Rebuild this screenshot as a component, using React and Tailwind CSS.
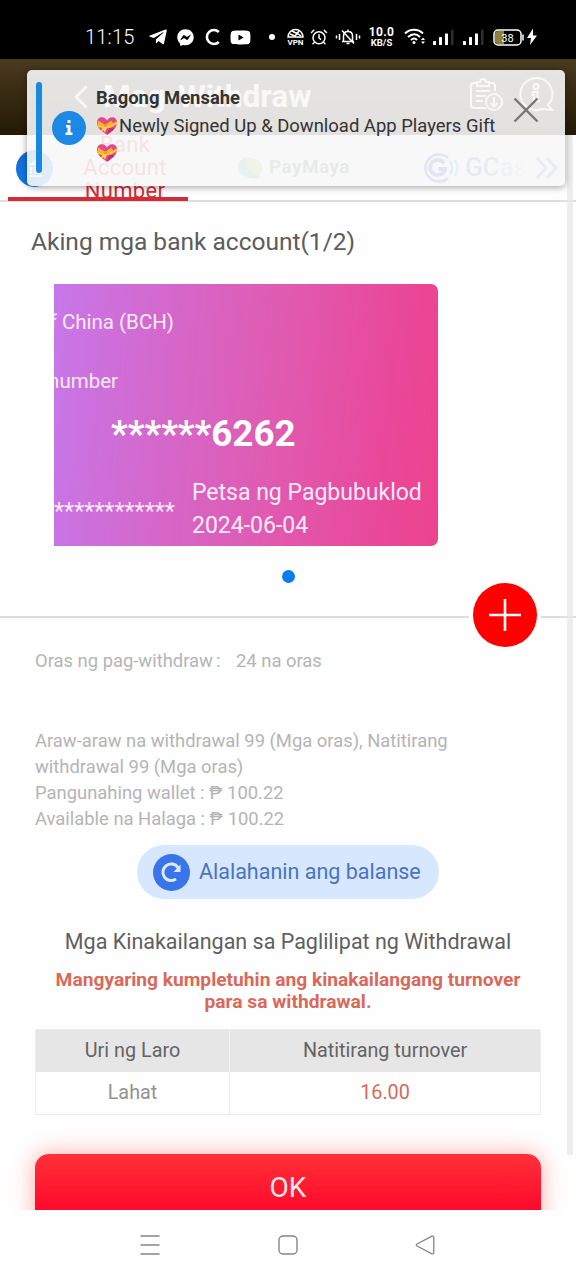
import { useState } from "react";
import { FaTelegramPlane, FaFacebookMessenger, FaYoutube } from "react-icons/fa";
import { AlarmClock } from "lucide-react";

// Emoji de regalo con corazón
const HeartGift = ({ className }) => (
  <svg viewBox="0 0 24 22" className={className} role="img" aria-label="heart with ribbon">
    <path d="M12 20.5C5 16.5 1 12.5 1 7.500C1 3.500 3.500 1.500 6.300 1.500C9 1.500 11 3 12 5C13 3 15 1.500 17.700 1.500C20.500 1.500 23 3.500 23 7.500C23 12.500 19 16.500 12 20.500Z" fill="#e5478c" />
    <path d="M14.500 12.500L20 13.500C18 16.500 15.500 18.700 12 20.500Z" fill="#c92f74" />
    <path d="M1.500 8L9 11L15 10L22.900 6L23 9L16 13L8 13.800L2.300 12Z" fill="#fcc63d" />
    <path d="M2 5L10 9.500L8.500 12L2 10ZM11 9L17 5L19 9L12 11.500Z" fill="#f9b52a" />
    <path d="M9 10.500L5 16.500L8.500 16L9.500 18.500L12.500 12Z" fill="#ffd259" />
    <circle cx="10.500" cy="10.500" r="2" fill="#ef9d22" />
  </svg>
);

const Signal = ({ className }) => (
  <svg viewBox="0 0 21 17" className={className}>
    <rect x="0" y="12" width="3" height="4" rx="0.5" fill="#fff" />
    <rect x="6" y="8" width="3" height="8" rx="0.5" fill="#fff" />
    <rect x="12" y="4.500" width="3" height="11.500" rx="0.5" fill="#fff" />
    <rect x="18" y="0.500" width="2.500" height="15.500" rx="0.5" fill="#2e2e2e" />
  </svg>
);

const StatusBar = () => (
  <div className="flex h-[59px] shrink-0 items-center bg-black pt-[15px] pl-[85px] text-white">
    <span className="w-[50px] text-[20px] leading-none font-light tracking-[0.2px]">11:15</span>
    <FaTelegramPlane className="ml-[13px] size-[20px]" />
    <FaFacebookMessenger className="ml-[9px] size-[17px]" />
    <svg viewBox="0 0 17 18" className="ml-[10px] h-[18px] w-[17px]">
      <path d="M14.800 4A7 7 0 1 0 14.800 14" fill="none" stroke="#fff" strokeWidth="2.600" />
    </svg>
    <FaYoutube className="ml-[9px] size-[21px]" />
    <span className="ml-[18px] size-[6px] rounded-full bg-white" />
    <svg viewBox="0 0 17 18" className="ml-[12px] h-[18px] w-[17px]">
      <path d="M1 9A7.500 7.500 0 0 1 16 9Z" fill="none" stroke="#fff" strokeWidth="1.500" />
      <path d="M3 6L8 8L12 3M5 3L11 6L14 8" fill="none" stroke="#fff" strokeWidth="1.500" />
      <text x="8.500" y="17" fill="#fff" fontSize="8" fontWeight="700" textAnchor="middle">VPN</text>
    </svg>
    <AlarmClock className="ml-[6px] size-[18px]" strokeWidth={2} />
    <svg viewBox="0 0 26 18" className="ml-[7px] h-[18px] w-[26px]" fill="none" stroke="#fff" strokeWidth="1.500">
      <path d="M7 13.500H19M8.500 13V8C8.500 5 10 3.500 13 3.500C16 3.500 17.500 5 17.500 8V13M11.500 15.500H14.500M13 1.500V3.500M7 2.500L19 15.500" />
      <path d="M4.500 6V12M1.500 7.500V10.500M21.500 6V12M24.500 7.500V10.500" />
    </svg>
    <div className="ml-[7px] w-[27px] text-center font-bold">
      <div className="text-[12px] leading-[11px] tracking-[0.3px]">10.0</div>
      <div className="text-[9.500px] leading-[9px]">KB/S</div>
    </div>
    <svg viewBox="0 0 22 18" className="ml-[9px] h-[18px] w-[22px]" fill="none" stroke="#fff" strokeWidth="2">
      <path d="M1 5.500C6 0.500 14 0.500 19 5.500M4 9C8 5.500 12.500 5.500 16 9M7 12C9 10.300 11.500 10.300 13 12" />
      <circle cx="10" cy="14.500" r="1.500" fill="#fff" stroke="none" />
      <path d="M17 12L19 9.500L21 12ZM17 13.500L19 16L21 13.500Z" fill="#fff" stroke="none" />
    </svg>
    <Signal className="ml-[7px] h-[17px] w-[21px]" />
    <Signal className="ml-[9px] h-[17px] w-[21px]" />
    <svg viewBox="0 0 32 17" className="ml-[9px] h-[17px] w-[32px]">
      <rect x="1" y="1" width="27" height="15" rx="4" fill="none" stroke="#fff" strokeWidth="1.500" />
      <path d="M2 5Q2 2 5 2H11V15H5Q2 15 2 12Z" fill="#8b8040" />
      <path d="M30 5.500V11.500" stroke="#fff" strokeWidth="1.500" />
      <text x="14.500" y="12.500" fill="#fff" fontSize="11" textAnchor="middle">38</text>
    </svg>
    <svg viewBox="0 0 12 18" className="ml-[1px] h-[18px] w-[12px]">
      <path d="M7 0.500L1 10H5L4 17L11 7.500H7Z" fill="#fff" />
    </svg>
  </div>
);

const Header = () => (
  <div className="flex h-[76px] shrink-0 items-center bg-linear-to-b from-[#4a3a20] to-[#241a04] pl-[74px] text-white">
    <svg viewBox="0 0 14 24" className="h-[24px] w-[14px]">
      <path d="M12.500 1.500L2 12L12.500 22.500" fill="none" stroke="#fff" strokeWidth="2.500" />
    </svg>
    <h1 className="ml-[15px] w-[220px] text-[31.600px] leading-none font-bold whitespace-nowrap">Mag-Withdraw</h1>
    <svg viewBox="0 0 34 34" className="mb-[4px] ml-[146px] size-[34px]" fill="none" stroke="#fff" strokeWidth="2">
      <path d="M17 30H5Q2 30 2 27V8Q2 5 5 5H8M20 5H23Q26 5 26 8V13" />
      <path d="M8 8V4H11Q11 1 14 1Q17 1 17 4H20V8ZM7 13H21M7 18H17M7 23H14" />
      <circle cx="25" cy="24" r="8" />
      <path d="M25 19V28M21.500 25L25 28.500L28.500 25" />
    </svg>
    <svg viewBox="0 0 36 36" className="mb-[4px] ml-[15px] size-[36px]" fill="none" stroke="#fff" strokeWidth="2">
      <path d="M30 28A16 16 0 1 0 24 32L34 33Z" />
      <circle cx="18" cy="9.500" r="2.500" />
      <path d="M14.500 15H19.500V24H22M14.500 24H19M14.500 15V18H16V24" />
    </svg>
  </div>
);

const Tabs = () => (
  <div className="flex h-[67px] shrink-0 border-b-2 border-[#dedede]">
    <div className="ml-[8px] flex h-[66px] w-[180px] overflow-hidden border-b-4 border-[#d52b35] pl-[8px]">
      <svg viewBox="0 0 37 37" className="mt-[15px] size-[37px] shrink-0">
        <defs>
          <linearGradient id="bank" x1="0" y1="0" x2="1" y2="1">
            <stop offset="0" stopColor="#1566d6" />
            <stop offset="1" stopColor="#0d8cf5" />
          </linearGradient>
        </defs>
        <circle cx="18.500" cy="18.500" r="18.500" fill="url(#bank)" />
        <path d="M12 15L19.500 10L27 15ZM14 17H16V24H14ZM18.500 17H20.500V24H18.500ZM23 17H25V24H23ZM13 25H26V27H13Z" fill="#fff" />
      </svg>
      <div className="-mt-[2px] ml-[19px] w-[106px] shrink-0 text-center text-[22px] leading-[23px] tracking-[0.3px] text-[#d92a35]">
        <div>Bank</div>
        <div>Account</div>
        <div>Number</div>
      </div>
    </div>
    <div className="flex items-center">
      <svg viewBox="0 0 26 24" className="ml-[49px] h-[24px] w-[26px]">
        <path d="M1 11C1 4 8 0 16 2C12 6 13 15 22 17L23 22C12 24 1 20 1 11Z" fill="#54b8a8" />
        <path d="M10 3C18 0 26 6 25 14C24 17 22 19 19 18C12 16 9 9 10 3Z" fill="#a6cf45" />
      </svg>
      <span className="ml-[6px] w-[84px] text-[19px] font-bold tracking-[0.4px] text-[#58706c]">PayMaya</span>
      <svg viewBox="0 0 40 32" className="ml-[69px] h-[32px] w-[40px]" fill="none" stroke="#1a46c8" strokeWidth="2.600">
        <path d="M26 6A13.500 13.500 0 1 0 26 26" />
        <path d="M22 11.500A7.500 7.500 0 1 0 23 17H16" strokeWidth="4" />
        <path d="M28 9Q32 16 28 23M33 8Q38 16 33 24" stroke="#6ba5ec" />
      </svg>
      <span className="ml-[3px] w-[64px] overflow-hidden bg-linear-to-r from-[#3a66a8] via-[#7895bb] to-white bg-clip-text text-[26px] font-medium text-transparent">GCas</span>
      <svg viewBox="0 0 24 24" className="ml-[6px] size-[24px]" fill="none" stroke="#5d7db4" strokeWidth="3">
        <path d="M2 2L11 12L2 22M12 2L21 12L12 22" />
      </svg>
    </div>
  </div>
);

const Toast = ({ onClose }) => (
  <div className="absolute top-[70px] left-[27px] flex h-[116px] w-[538px] rounded-[5px] bg-[#f7f7f7]/90 shadow-[0_1px_7px_rgba(0,0,0,0.4)]">
    <div className="mt-[12px] ml-[9px] h-[91px] w-[6px] rounded-full bg-[#158ae0]" />
    <div className="mt-[41px] ml-[10px] flex size-[34px] items-center justify-center rounded-full bg-[#1e88e5]">
      <svg viewBox="0 0 10 18" className="h-[18px] w-[10px]" fill="#fff">
        <rect x="3.500" y="1" width="3" height="3" />
        <path d="M2 6H6.500V13.500H8.500V16H1.500V13.500H3.500V8.500H2Z" />
      </svg>
    </div>
    <div className="mt-[14px] ml-[10px] w-[410px] text-[18.450px] leading-[28px] text-[#333]">
      <div className="font-bold">Bagong Mensahe</div>
      <div className="flex items-center whitespace-nowrap">
        <HeartGift className="mr-[1px] h-[20px] w-[22px]" />
        Newly Signed Up &amp; Download App Players Gift
      </div>
      <HeartGift className="mt-[3px] h-[20px] w-[22px]" />
    </div>
    <button onClick={onClose} className="mt-[27px] ml-[7px] size-[26px]" aria-label="Close">
      <svg viewBox="0 0 26 26" className="size-[26px]">
        <path d="M1.500 1.500L24.500 24.500M24.500 1.500L1.500 24.500" stroke="#777" strokeWidth="2.400" />
      </svg>
    </button>
  </div>
);

const BankCard = () => (
  <div className="ml-[54px] flex h-[262px] w-[384px] shrink-0 flex-col overflow-hidden rounded-r-[7px] bg-[linear-gradient(95deg,#c777ea_0%,#d468cc_28%,#df5cb2_55%,#e9489a_85%,#ed438e_100%)] text-[20.500px] text-[#fdeafa]">
    <div className="mt-[24px] flex h-[28px] w-[120px] items-center justify-end whitespace-nowrap">of China (BCH)</div>
    <div className="mt-[31px] flex h-[28px] w-[64px] items-center justify-end">number</div>
    <div className="mt-[18px] h-[42px] w-[298px] pl-[57px] text-[36.800px] leading-[42px] font-bold whitespace-nowrap text-white">******6262</div>
    <div className="mt-[22px] flex">
      <div className="mt-[18px] w-[138px] text-[23.400px] leading-[33px]">************</div>
      <div className="text-[23px] leading-[32.500px] whitespace-nowrap">
        <div>Petsa ng Pagbubuklod</div>
        <div>2024-06-04</div>
      </div>
    </div>
  </div>
);

const App = () => {
  const [showToast, setShowToast] = useState(true);

  return (
    <div className="relative flex h-[1280px] w-[576px] flex-col overflow-hidden bg-[#fefefe] font-['Roboto',sans-serif]">
      <StatusBar />
      <Header />
      <div className="flex h-[1075px] shrink-0 flex-col overflow-hidden">
        <Tabs />
        <h2 className="mt-[24px] mb-[26px] h-[32px] shrink-0 pl-[31px] text-[24.500px] leading-[32px] text-[#5c5c5c]">Aking mga bank account(1/2)</h2>
        <BankCard />
        <div className="mx-auto mt-[24px] size-[13px] shrink-0 rounded-full bg-[#087df0]" />

        {/* Separador con botón para agregar cuenta */}
        <div className="flex h-[64px] shrink-0 items-center">
          <div className="mt-[4px] h-[2px] w-[469px] bg-[#dedede]" />
          <button className="mx-[4px] flex size-[64px] items-center justify-center rounded-full bg-[#fe0000]" aria-label="Add">
            <svg viewBox="0 0 34 34" className="size-[34px]">
              <path d="M17 1V33M1 17H33" stroke="#fff" strokeWidth="2.600" />
            </svg>
          </button>
          <div className="mt-[4px] h-[2px] flex-1 bg-[#dedede]" />
        </div>

        <div className="mt-[1px] flex h-[26px] shrink-0 items-center pl-[35px] text-[18.400px] text-[#b5b5b5]">
          <span className="w-[201px]">Oras ng pag-withdraw<span className="ml-[3px]">:</span></span>
          <span>24 na oras</span>
        </div>
        <div className="mt-[54px] shrink-0 pl-[35px] text-[18.400px] leading-[26px] text-[#b5b5b5]">
          <div>Araw-araw na withdrawal 99 (Mga oras), Natitirang</div>
          <div>withdrawal 99 (Mga oras)</div>
          <div>Pangunahing wallet : ₱ 100.22</div>
          <div>Available na Halaga : ₱ 100.22</div>
        </div>

        <button className="mt-[13px] ml-[137px] flex h-[54px] w-[302px] shrink-0 items-center rounded-full bg-[#d7e7fe] pl-[16px] text-[21.500px] whitespace-nowrap text-[#4874c3]">
          <svg viewBox="0 0 37 37" className="mr-[9px] size-[37px] shrink-0">
            <circle cx="18.500" cy="18.500" r="18.500" fill="#3974eb" />
            <path d="M25 13.500A8.300 8.300 0 1 0 23 25" fill="none" stroke="#dcebff" strokeWidth="3" />
            <path d="M27.500 10.500V18H20.500Z" fill="#dcebff" />
          </svg>
          Alalahanin ang balanse
        </button>

        <div className="mt-[28px] shrink-0 text-center text-[21.500px] leading-[30px] text-[#5f5f5f]">Mga Kinakailangan sa Paglilipat ng Withdrawal</div>
        <div className="mx-[40px] mt-[12px] shrink-0 text-center text-[19.200px] leading-[22px] font-bold text-[#d9695a]">
          <div>Mangyaring kumpletuhin ang kinakailangang turnover</div>
          <div>para sa withdrawal.</div>
        </div>

        <div className="mt-[16px] ml-[35px] grid w-[506px] shrink-0 grid-cols-[194px_310px] overflow-hidden rounded-t-[2px] border border-[#ececec] text-center text-[19.800px]">
          <div className="h-[42px] border-r border-[#f3f3f3] bg-[#e6e6e6] leading-[42px] text-[#636363]">Uri ng Laro</div>
          <div className="h-[42px] bg-[#e6e6e6] leading-[42px] text-[#636363]">Natitirang turnover</div>
          <div className="h-[42px] border-r border-[#ececec] leading-[42px] text-[#929292]">Lahat</div>
          <div className="h-[42px] leading-[42px] text-[#d66a5c]">16.00</div>
        </div>

        <button className="mt-[39px] ml-[35px] h-[80px] w-[506px] shrink-0 rounded-[14px] bg-[linear-gradient(180deg,#ff3038_0%,#ff0a2b_70%)] pb-[12px] text-[28px] text-[#ffe9ea] shadow-[0_0_22px_rgba(255,70,60,0.45)]">OK</button>
      </div>

      <div className="flex h-[70px] shrink-0 items-center bg-[#fefefe] pl-[140px]">
        <svg viewBox="0 0 20 20" className="size-[20px]" stroke="#858585" strokeWidth="1.500">
          <path d="M0.500 1H19.500M0.500 10H19.500M0.500 19H19.500" />
        </svg>
        <svg viewBox="0 0 20 20" className="ml-[118px] size-[20px]">
          <rect x="1" y="1" width="18" height="18" rx="4" fill="none" stroke="#858585" strokeWidth="1.400" />
        </svg>
        <svg viewBox="0 0 20 20" className="ml-[117px] size-[20px]">
          <path d="M17 1.200L2 9Q0.500 10 2 11L17 18.800Q18.800 19.200 18.800 17.500V2.500Q18.800 0.800 17 1.200Z" fill="none" stroke="#858585" strokeWidth="1.300" />
        </svg>
      </div>

      {/* Barra de desplazamiento */}
      <div className="absolute top-[135px] right-[3px] h-[1020px] w-[6px] bg-[#e8e8e8]/80" />
      {showToast && <Toast onClose={() => setShowToast(false)} />}
    </div>
  );
};

export default App;
